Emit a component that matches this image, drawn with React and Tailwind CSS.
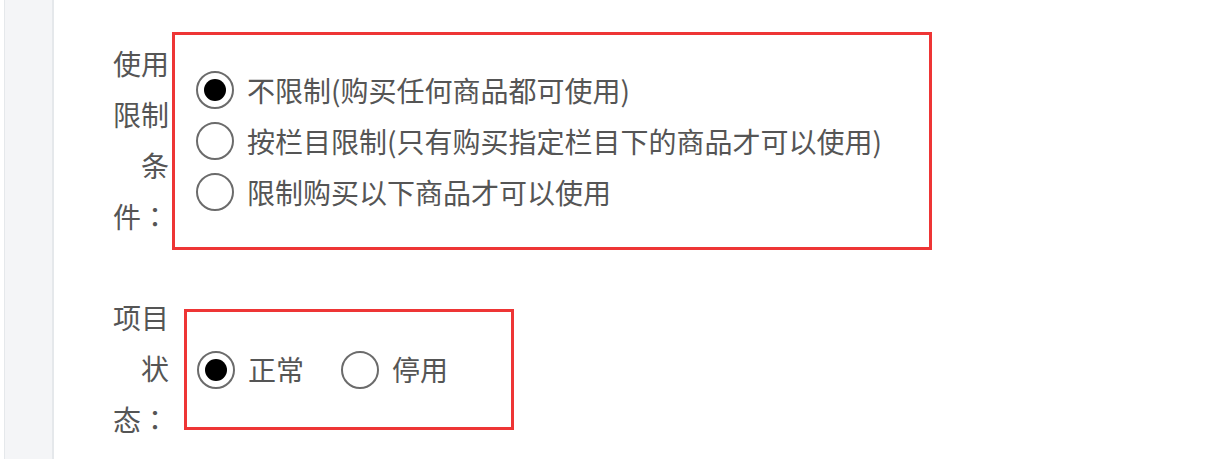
import React from "react";

const font = { fontFamily: '"Noto Sans CJK SC", "Noto Sans", sans-serif' };
// fullwidth punctuation sits centred in the TC face
const tc = { fontFamily: '"Noto Sans CJK TC", "Noto Sans CJK SC", sans-serif' };

function Radio({ checked, label }) {
  return (
    <label className="flex items-center h-[51px]">
      <span className="flex items-center justify-center w-[38px] h-[38px] rounded-full border-2 border-[#6b6b6b] bg-white shrink-0">
        {checked && <span className="w-[22px] h-[22px] rounded-full bg-black" />}
      </span>
      <span className="ml-[13px] whitespace-nowrap">{label}</span>
    </label>
  );
}

export default function App() {
  return (
    <div
      className="flex min-h-[459px] bg-white text-[28px] text-[#555555] leading-[51px]"
      style={font}
    >
      <aside className="ml-[4px] w-[50px] shrink-0 border-l border-r-2 border-[#e5e8eb] bg-[#f4f5f7]" />
      <main className="pl-[59px] pt-[32px]">
        {/* usage restriction */}
        <div className="flex items-start">
          <div className="mt-[6px] w-[56px] text-right">
            使用限制条件<span style={tc}>：</span>
          </div>
          <div className="ml-[3px] flex w-[760px] h-[218px] flex-col justify-center border-[3px] border-[#ee3535] pl-[21px]">
            <Radio checked label="不限制(购买任何商品都可使用)" />
            <Radio label="按栏目限制(只有购买指定栏目下的商品才可以使用)" />
            <Radio label="限制购买以下商品才可以使用" />
          </div>
        </div>

        {/* item status */}
        <div className="mt-[42px] flex items-start">
          <div className="w-[56px] text-right">
            项目状态<span style={tc}>：</span>
          </div>
          <div className="ml-[15px] mt-[17px] flex w-[330px] h-[121px] items-center border-[3px] border-[#ee3535] pl-[10px]">
            <Radio checked label="正常" />
            <div className="ml-[37px]">
              <Radio label="停用" />
            </div>
          </div>
        </div>
      </main>
    </div>
  );
}
